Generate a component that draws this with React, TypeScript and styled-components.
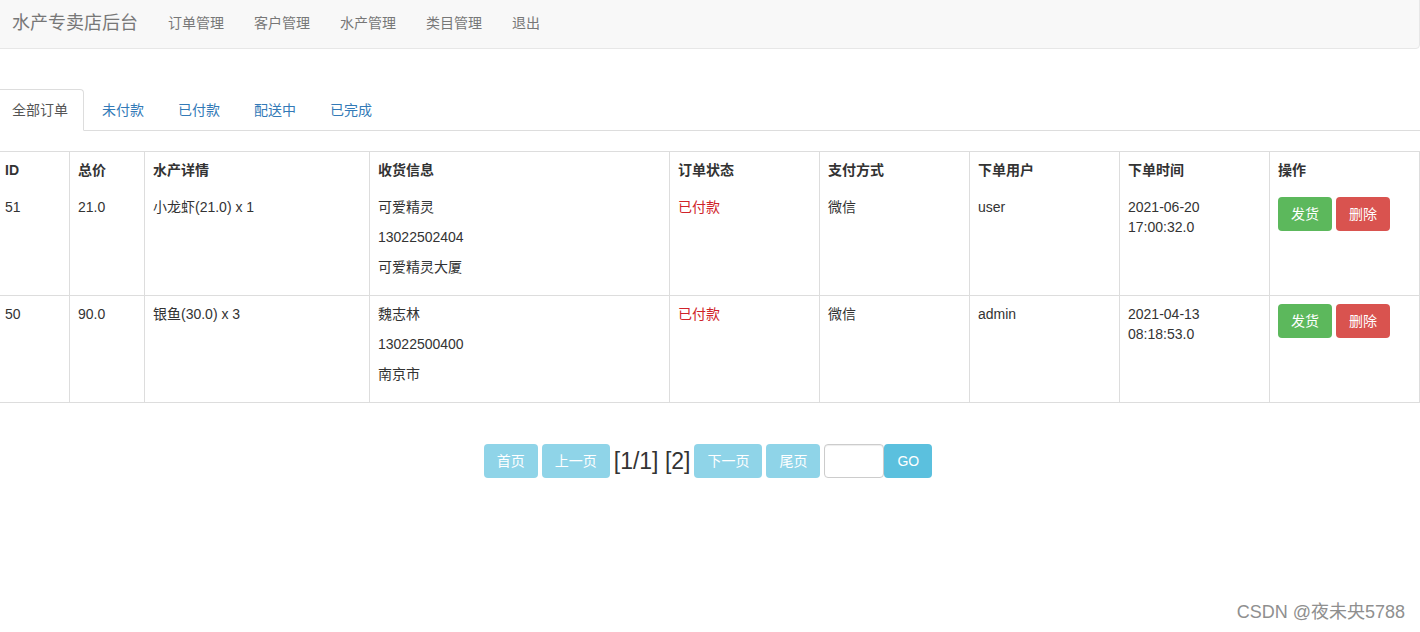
import React from 'react';
import styled, { createGlobalStyle } from 'styled-components';

const GlobalStyle = createGlobalStyle`
  html, body {
    margin: 0;
    padding: 0;
    background: #fff;
    overflow: hidden;
  }
  body {
    font-family: "Liberation Sans", Arial, "Noto Sans CJK SC", sans-serif;
    font-size: 14px;
    line-height: 20px;
    color: #333;
  }
`;

const Page = styled.div`
  position: relative;
  margin-left: -4px;
  height: 632px;
`;

const Navbar = styled.nav`
  margin-top: -4px;
  height: 51px;
  display: flex;
  align-items: center;
  background: #f8f8f8;
  border: 1px solid #e7e7e7;
  border-radius: 4px;
`;

const Brand = styled.span`
  padding: 0 15px;
  font-size: 18px;
  line-height: 20px;
  color: #777;
`;

const NavLink = styled.a`
  padding: 0 15px;
  font-size: 14px;
  color: #777;
  text-decoration: none;
`;

const Tabs = styled.ul`
  display: flex;
  list-style: none;
  margin: 40px 0 0;
  padding: 0;
  border-bottom: 1px solid #ddd;
`;

const Tab = styled.li<{ $active?: boolean }>`
  margin: 0 2px -1px 0;
  padding: 10px 15px;
  border: 1px solid ${(p) => (p.$active ? '#ddd' : 'transparent')};
  border-bottom-color: ${(p) => (p.$active ? '#fff' : 'transparent')};
  border-radius: 4px 4px 0 0;
  background: ${(p) => (p.$active ? '#fff' : 'transparent')};
  color: ${(p) => (p.$active ? '#555' : '#337ab7')};
`;

const Table = styled.table`
  width: 100%;
  margin-top: 20px;
  border-collapse: collapse;
  table-layout: fixed;
  border: 1px solid #ddd;
`;

const Th = styled.th`
  padding: 8px 8px 9px;
  text-align: left;
  font-weight: bold;
  border-left: 1px solid #ddd;
  border-right: 1px solid #ddd;
`;

const Row = styled.tr`
  border-bottom: 1px solid #ddd;
`;

const Td = styled.td<{ $danger?: boolean }>`
  padding: 8px;
  vertical-align: top;
  border-left: 1px solid #ddd;
  border-right: 1px solid #ddd;
  color: ${(p) => (p.$danger ? '#d0232a' : '#333')};
`;

const Line = styled.p`
  margin: 0 0 10px;
`;

const Actions = styled.div`
  display: flex;
  gap: 4px;
`;

const Button = styled.button<{ $variant: 'success' | 'danger' | 'info'; $faded?: boolean }>`
  height: 34px;
  padding: 6px 12px;
  font-family: inherit;
  font-size: 14px;
  line-height: 20px;
  color: #fff;
  border: 1px solid transparent;
  border-radius: 4px;
  background: ${(p) => ({ success: '#5cb85c', danger: '#d9534f', info: '#5bc0de' }[p.$variant])};
  opacity: ${(p) => (p.$faded ? 0.68 : 1)};
`;

const Pager = styled.div`
  display: flex;
  justify-content: center;
  align-items: center;
  gap: 4px;
  margin-top: 41px;
`;

const PageText = styled.span`
  font-size: 23px;
  line-height: 30px;
  color: #333;
`;

const GoGroup = styled.div`
  display: flex;
`;

const PageInput = styled.input`
  box-sizing: border-box;
  width: 60px;
  height: 34px;
  border: 1px solid #ccc;
  border-radius: 4px;
  box-shadow: inset 0 1px 1px rgba(0, 0, 0, 0.075);
`;

const Watermark = styled.div`
  position: absolute;
  right: 15px;
  bottom: 6px;
  font-size: 18px;
  color: #8f8f8f;
`;

const orders = [
  {
    id: 51, total: '21.0', detail: '小龙虾(21.0) x 1',
    info: ['可爱精灵', '13022502404', '可爱精灵大厦'],
    status: '已付款', pay: '微信', user: 'user', date: '2021-06-20', time: '17:00:32.0',
  },
  {
    id: 50, total: '90.0', detail: '银鱼(30.0) x 3',
    info: ['魏志林', '13022500400', '南京市'],
    status: '已付款', pay: '微信', user: 'admin', date: '2021-04-13', time: '08:18:53.0',
  },
];

const widths = [73, 75, 225, 300, 150, 150, 150, 150, 150];
const heads = ['ID', '总价', '水产详情', '收货信息', '订单状态', '支付方式', '下单用户', '下单时间', '操作'];

export default function App() {
  return (
    <Page>
      <GlobalStyle />
      <Navbar>
        <Brand>水产专卖店后台</Brand>
        {['订单管理', '客户管理', '水产管理', '类目管理', '退出'].map((n) => (
          <NavLink key={n}>{n}</NavLink>
        ))}
      </Navbar>

      <Tabs>
        {['全部订单', '未付款', '已付款', '配送中', '已完成'].map((t, i) => (
          <Tab key={t} $active={i === 0}>{t}</Tab>
        ))}
      </Tabs>

      <Table>
        <colgroup>
          {widths.map((w, i) => <col key={i} style={{ width: w }} />)}
        </colgroup>
        <thead>
          <tr>
            {heads.map((h) => <Th key={h}>{h}</Th>)}
          </tr>
        </thead>
        <tbody>
          {orders.map((o) => (
            <Row key={o.id}>
              <Td>{o.id}</Td>
              <Td>{o.total}</Td>
              <Td>{o.detail}</Td>
              <Td>
                {o.info.map((l) => <Line key={l}>{l}</Line>)}
              </Td>
              <Td $danger>{o.status}</Td>
              <Td>{o.pay}</Td>
              <Td>{o.user}</Td>
              <Td>{o.date}<br />{o.time}</Td>
              <Td>
                <Actions>
                  <Button $variant="success">发货</Button>
                  <Button $variant="danger">删除</Button>
                </Actions>
              </Td>
            </Row>
          ))}
        </tbody>
      </Table>

      <Pager>
        <Button $variant="info" $faded>首页</Button>
        <Button $variant="info" $faded>上一页</Button>
        <PageText>[1/1] [2]</PageText>
        <Button $variant="info" $faded>下一页</Button>
        <Button $variant="info" $faded>尾页</Button>
        <GoGroup>
          <PageInput />
          <Button $variant="info">GO</Button>
        </GoGroup>
      </Pager>

      <Watermark>CSDN @夜未央5788</Watermark>
    </Page>
  );
}
